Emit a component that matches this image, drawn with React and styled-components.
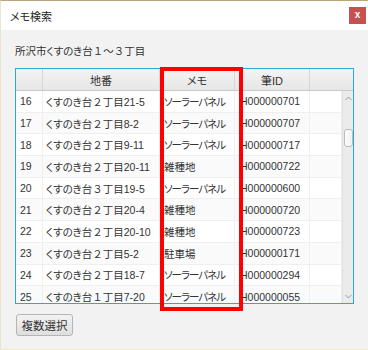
import React from 'react';
import styled, { createGlobalStyle } from 'styled-components';

const GlobalStyle = createGlobalStyle`
  html, body {
    margin: 0;
    padding: 0;
    background: #f2f2f2;
  }
  * {
    box-sizing: border-box;
  }
`;

const FONT = `"Liberation Sans", "Noto Sans CJK JP", sans-serif`;

const COLS = '27px 117px 75px 75px 32px';

const Window = styled.div`
  width: 368px;
  height: 350px;
  display: flex;
  flex-direction: column;
  background: #f2f2f2;
  border-top: 1px solid #b8a57c;
  border-left: 1px solid #ece3cf;
  border-bottom: 1px solid #f6ebc0;
  font-family: ${FONT};
  font-feature-settings: "palt";
  font-size: 11px;
  color: #333;
  overflow: hidden;
`;

const TitleBar = styled.div`
  height: 29px;
  flex: none;
  display: flex;
  align-items: center;
  justify-content: space-between;
  background: #fff;
  padding: 0 2px 0 9px;
  color: #222;
  font-size: 11px;
`;

const CloseButton = styled.div`
  width: 17px;
  height: 17px;
  display: flex;
  align-items: center;
  justify-content: center;
  background: #c75050;
  color: #fff;
  font-weight: bold;
  font-size: 10px;
  line-height: 1;
  padding-bottom: 1px;
`;

const Content = styled.div`
  flex: 1;
  padding: 0 0 0 14px;
  display: flex;
  flex-direction: column;
`;

const Subtitle = styled.div`
  margin-top: 14px;
  height: 14px;
  line-height: 14px;
  font-size: 10.5px;
`;

/* full-width digits keep their em box, as in the original font */
const Wide = styled.span`
  font-feature-settings: normal;
`;

const TableWrap = styled.div`
  position: relative;
  margin-top: 10px;
  width: 339px;
`;

const Table = styled.div`
  width: 339px;
  height: 236px;
  border: 1px solid #2aa7de;
  background: #fff;
  display: flex;
  flex-direction: column;
  overflow: hidden;
`;

const Header = styled.div`
  display: grid;
  grid-template-columns: 27px 117px 75px 75px 1fr;
  height: 22px;
  flex: none;
  background: linear-gradient(#f4f4f4, #e6e6e6);
  border-bottom: 1px solid #c9c9c9;
`;

const HeadCell = styled.div`
  display: flex;
  align-items: center;
  justify-content: center;
  border-right: ${p => (p.last ? 'none' : '1px solid #d6d6d6')};
  color: #333;
`;

const Body = styled.div`
  flex: 1;
  display: flex;
  overflow: hidden;
`;

const Rows = styled.div`
  width: 326px;
  display: flex;
  flex-direction: column;
`;

const Row = styled.div`
  display: grid;
  grid-template-columns: ${COLS};
  height: 21.7px;
  flex: none;
  background: ${p => (p.odd ? '#fafafa' : '#fff')};
  border-bottom: 1px solid #efefef;
`;

const Cell = styled.div`
  display: flex;
  align-items: center;
  padding-left: ${p => p.pad || 4}px;
  font-size: 10.5px;
  letter-spacing: ${p => (p.tight ? '-1px' : 'normal')};
  white-space: nowrap;
  overflow: hidden;
  border-right: 1px solid #efefef;
`;

const ScrollTrack = styled.div`
  width: 11px;
  flex: none;
  background: #ebebeb;
  border-left: 1px solid #e0e0e0;
  display: flex;
  flex-direction: column;
  align-items: center;
`;

const Arrow = styled.div`
  height: 14px;
  display: flex;
  align-items: center;
  justify-content: center;
`;

const Thumb = styled.div`
  width: 9px;
  height: 18px;
  margin-top: 24px;
  background: linear-gradient(90deg, #fdfdfd, #f0f0f0);
  border: 1px solid #bcbcbc;
  border-radius: 3px;
`;

const Spacer = styled.div`
  flex: 1;
`;

const Highlight = styled.div`
  position: absolute;
  left: 145px;
  top: -1px;
  width: 83px;
  height: 244px;
  border: 4px solid #ff0000;
  pointer-events: none;
`;

const Button = styled.button`
  margin-top: 10px;
  align-self: flex-start;
  margin-left: 1px;
  width: 57px;
  height: 22px;
  padding: 0;
  font-family: ${FONT};
  font-size: 11.5px;
  color: #333;
  background: linear-gradient(#f3f3f3, #dedede);
  border: 1px solid #b4b4b4;
  border-radius: 3px;
`;

const rows = [
  ['16', 'くすのき台２丁目21-5', 'ソーラーパネル', 'H000000701'],
  ['17', 'くすのき台２丁目8-2', 'ソーラーパネル', 'H000000707'],
  ['18', 'くすのき台２丁目9-11', 'ソーラーパネル', 'H000000717'],
  ['19', 'くすのき台２丁目20-11', '雑種地', 'H000000722'],
  ['20', 'くすのき台３丁目19-5', 'ソーラーパネル', 'H000000600'],
  ['21', 'くすのき台２丁目20-4', '雑種地', 'H000000720'],
  ['22', 'くすのき台２丁目20-10', '雑種地', 'H000000723'],
  ['23', 'くすのき台２丁目5-2', '駐車場', 'H000000171'],
  ['24', 'くすのき台２丁目18-7', 'ソーラーパネル', 'H000000294'],
  ['25', 'くすのき台１丁目7-20', 'ソーラーパネル', 'H000000055'],
];

// wrap full-width digits and the wave dash so they keep their full width
const widen = (text) =>
  text.split(/([０-９～])/).map((part, i) =>
    /^[０-９～]$/.test(part) ? <Wide key={i}>{part}</Wide> : part
  );

// katakana runs are narrower in the original UI font
const isKana = (text) => /[ァ-ヶー]/.test(text);

const Chevron = ({ up }) => (
  <svg width="7" height="5" viewBox="0 0 7 5">
    <path
      d={up ? 'M0.5 4 L3.5 1 L6.5 4' : 'M0.5 1 L3.5 4 L6.5 1'}
      fill="none"
      stroke="#9a9a9a"
      strokeWidth="1"
    />
  </svg>
);

const App = () => (
  <Window>
    <GlobalStyle />
    <TitleBar>
      <span>メモ検索</span>
      <CloseButton>x</CloseButton>
    </TitleBar>
    <Content>
      <Subtitle>{widen('所沢市くすのき台１～３丁目')}</Subtitle>
      <TableWrap>
        <Table>
          <Header>
            <HeadCell />
            <HeadCell>地番</HeadCell>
            <HeadCell>メモ</HeadCell>
            <HeadCell>筆ID</HeadCell>
            <HeadCell last />
          </Header>
          <Body>
            <Rows>
              {rows.map((r, i) => (
                <Row key={r[0]} odd={i % 2 === 1}>
                  <Cell pad={4}>{r[0]}</Cell>
                  <Cell pad={3}>{widen(r[1])}</Cell>
                  <Cell pad={4} tight={isKana(r[2])}>{r[2]}</Cell>
                  <Cell pad={5}>{r[3]}</Cell>
                  <Cell />
                </Row>
              ))}
            </Rows>
            <ScrollTrack>
              <Arrow><Chevron up /></Arrow>
              <Thumb />
              <Spacer />
              <Arrow><Chevron /></Arrow>
            </ScrollTrack>
          </Body>
        </Table>
        <Highlight />
      </TableWrap>
      <Button>複数選択</Button>
    </Content>
  </Window>
);

export default App;
